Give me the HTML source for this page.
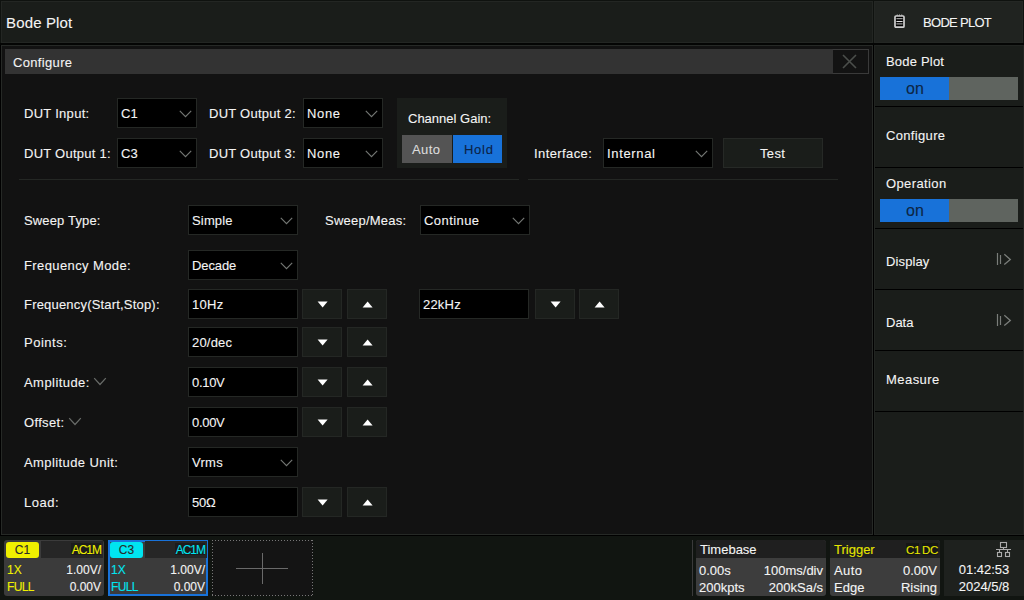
<!DOCTYPE html>
<html><head><meta charset="utf-8">
<style>
*{margin:0;padding:0;box-sizing:border-box}
html,body{width:1024px;height:600px;overflow:hidden;background:#000;font-family:"Liberation Sans",sans-serif;color:#f4f4f4;font-size:13px}
.a{position:absolute}
.t{position:absolute;white-space:nowrap;line-height:15px;height:15px;-webkit-text-stroke:0.1px currentColor}
.dd{position:absolute;background:#000;border:1px solid #252825;height:30px}
.btn{position:absolute;background:#1a1d1a;border:1px solid #242724;width:40px;height:30px}
.chev{position:absolute;right:4px;top:11px;width:13px;height:8px}
.tri-d{position:absolute;left:15px;top:12px;width:0;height:0;border-left:5px solid transparent;border-right:5px solid transparent;border-top:6px solid #fff}
.tri-u{position:absolute;left:15px;top:12px;width:0;height:0;border-left:5px solid transparent;border-right:5px solid transparent;border-bottom:6px solid #fff}
.sep{position:absolute;height:1px;background:#242724}
.sb{position:absolute;left:875px;width:149px;background:#1c1f1c}
.sdiv{position:absolute;left:875px;width:148px;height:2px;background:#000}
</style></head><body>
<div class="a" style="left:0px;top:0px;width:1024px;height:45px;background:#0f120f;"></div>
<div class="a" style="left:1px;top:1px;width:872px;height:42px;background:#1a1d1a;border:1px solid #232623"></div>
<div class="a" style="left:0px;top:43px;width:1024px;height:2px;background:#040504;"></div>
<div class="t" style="left:6px;top:15px;font-size:15px;letter-spacing:0.15px">Bode Plot</div>
<div class="a" style="left:874px;top:1px;width:149px;height:42px;background:#202320;border:1px solid #242724"></div>
<div class="a" style="left:1px;top:45px;width:872px;height:490px;background:#121212;border:1px solid #262926"></div>
<div class="a" style="left:5px;top:49px;width:827px;height:25px;background:#333333;"></div>
<div class="t" style="left:13px;top:55px;letter-spacing:0.34px;">Configure</div>
<div class="a" style="left:832px;top:49px;width:37px;height:25px;background:#131313;border:1px solid #3a3a3a;border-left-color:#333"></div>
<svg class="a" style="left:842px;top:54px" width="15" height="15" viewBox="0 0 15 15"><path d="M1 1L14 14M14 1L1 14" stroke="#4b4e4b" stroke-width="1.6"/></svg>
<div class="t" style="left:24px;top:106px;letter-spacing:0.28px;">DUT Input:</div>
<div class="dd" style="left:117px;top:98px;width:80px"><div class="t" style="left:3px;top:7px;">C1</div><svg class="chev" viewBox="0 0 13 8"><path d="M0.8 0.8L6.5 6.6L12.2 0.8" fill="none" stroke="#747774" stroke-width="1.15"/></svg></div>
<div class="t" style="left:209px;top:106px;letter-spacing:0.25px;">DUT Output 2:</div>
<div class="dd" style="left:303px;top:98px;width:80px"><div class="t" style="left:3px;top:7px;letter-spacing:0.67px;">None</div><svg class="chev" viewBox="0 0 13 8"><path d="M0.8 0.8L6.5 6.6L12.2 0.8" fill="none" stroke="#747774" stroke-width="1.15"/></svg></div>
<div class="t" style="left:24px;top:146px;letter-spacing:0.25px;">DUT Output 1:</div>
<div class="dd" style="left:117px;top:138px;width:80px"><div class="t" style="left:3px;top:7px;">C3</div><svg class="chev" viewBox="0 0 13 8"><path d="M0.8 0.8L6.5 6.6L12.2 0.8" fill="none" stroke="#747774" stroke-width="1.15"/></svg></div>
<div class="t" style="left:209px;top:146px;letter-spacing:0.25px;">DUT Output 3:</div>
<div class="dd" style="left:303px;top:138px;width:80px"><div class="t" style="left:3px;top:7px;letter-spacing:0.67px;">None</div><svg class="chev" viewBox="0 0 13 8"><path d="M0.8 0.8L6.5 6.6L12.2 0.8" fill="none" stroke="#747774" stroke-width="1.15"/></svg></div>
<div class="a" style="left:397px;top:98px;width:110px;height:70px;background:#1a1d1a;"></div>
<div class="t" style="left:408px;top:111px;">Channel Gain:</div>
<div class="a" style="left:402px;top:135px;width:50px;height:28px;background:#545454;"></div>
<div class="t" style="left:412px;top:142px;color:#dcdcdc;letter-spacing:0.40px;">Auto</div>
<div class="a" style="left:453px;top:135px;width:49px;height:28px;background:#1872d9;"></div>
<div class="t" style="left:464px;top:142px;color:#0c2245;letter-spacing:0.73px;">Hold</div>
<div class="t" style="left:534px;top:146px;letter-spacing:0.40px;">Interface:</div>
<div class="dd" style="left:603px;top:138px;width:110px"><div class="t" style="left:3px;top:7px;letter-spacing:0.66px;">Internal</div><svg class="chev" viewBox="0 0 13 8"><path d="M0.8 0.8L6.5 6.6L12.2 0.8" fill="none" stroke="#747774" stroke-width="1.15"/></svg></div>
<div class="a" style="left:723px;top:138px;width:100px;height:30px;background:#1a1d1a;border:1px solid #262926"></div>
<div class="t" style="left:760px;top:146px;letter-spacing:0.33px;">Test</div>
<div class="sep" style="left:19px;top:179px;width:500px"></div><div class="sep" style="left:528px;top:179px;width:310px"></div>
<div class="t" style="left:24px;top:213px;letter-spacing:0.15px;">Sweep Type:</div>
<div class="dd" style="left:188px;top:205px;width:110px"><div class="t" style="left:3px;top:7px;letter-spacing:0.16px;">Simple</div><svg class="chev" viewBox="0 0 13 8"><path d="M0.8 0.8L6.5 6.6L12.2 0.8" fill="none" stroke="#747774" stroke-width="1.15"/></svg></div>
<div class="t" style="left:325px;top:213px;letter-spacing:0.24px;">Sweep/Meas:</div>
<div class="dd" style="left:420px;top:205px;width:110px"><div class="t" style="left:3px;top:7px;letter-spacing:0.43px;">Continue</div><svg class="chev" viewBox="0 0 13 8"><path d="M0.8 0.8L6.5 6.6L12.2 0.8" fill="none" stroke="#747774" stroke-width="1.15"/></svg></div>
<div class="t" style="left:24px;top:258px;letter-spacing:0.39px;">Frequency Mode:</div>
<div class="dd" style="left:188px;top:250px;width:110px"><div class="t" style="left:3px;top:7px;letter-spacing:-0.10px;">Decade</div><svg class="chev" viewBox="0 0 13 8"><path d="M0.8 0.8L6.5 6.6L12.2 0.8" fill="none" stroke="#747774" stroke-width="1.15"/></svg></div>
<div class="t" style="left:24px;top:297px;letter-spacing:0.19px;">Frequency(Start,Stop):</div>
<div class="dd" style="left:188px;top:289px;width:110px"><div class="t" style="left:3px;top:7px;letter-spacing:0.33px;">10Hz</div></div>
<div class="btn" style="left:302px;top:289px"><svg class="a" style="left:-1px;top:-1px" width="40" height="30"><path d="M15.6 12.6H25.6L20.6 18.4Z" fill="#fff"/></svg></div><div class="btn" style="left:347px;top:289px"><svg class="a" style="left:-1px;top:-1px" width="40" height="30"><path d="M15.6 18.4H25.6L20.6 12.6Z" fill="#fff"/></svg></div>
<div class="dd" style="left:419px;top:289px;width:110px"><div class="t" style="left:3px;top:7px;letter-spacing:0.20px;">22kHz</div></div>
<div class="btn" style="left:535px;top:289px"><svg class="a" style="left:-1px;top:-1px" width="40" height="30"><path d="M15.6 12.6H25.6L20.6 18.4Z" fill="#fff"/></svg></div><div class="btn" style="left:579px;top:289px"><svg class="a" style="left:-1px;top:-1px" width="40" height="30"><path d="M15.6 18.4H25.6L20.6 12.6Z" fill="#fff"/></svg></div>
<div class="t" style="left:24px;top:335px;letter-spacing:0.50px;">Points:</div>
<div class="dd" style="left:188px;top:327px;width:110px"><div class="t" style="left:3px;top:7px;letter-spacing:0.20px;">20/dec</div></div>
<div class="btn" style="left:302px;top:327px"><svg class="a" style="left:-1px;top:-1px" width="40" height="30"><path d="M15.6 12.6H25.6L20.6 18.4Z" fill="#fff"/></svg></div><div class="btn" style="left:347px;top:327px"><svg class="a" style="left:-1px;top:-1px" width="40" height="30"><path d="M15.6 18.4H25.6L20.6 12.6Z" fill="#fff"/></svg></div>
<div class="t" style="left:24px;top:375px;letter-spacing:0.44px;">Amplitude:</div>
<svg class="a" style="left:93px;top:377px" width="14" height="10" viewBox="0 0 14 10"><path d="M1.2 1.2L7 7.5L12.8 1.2" fill="none" stroke="#686b68" stroke-width="1.25"/></svg>
<div class="dd" style="left:188px;top:367px;width:110px"><div class="t" style="left:3px;top:7px;letter-spacing:-0.30px;">0.10V</div></div>
<div class="btn" style="left:302px;top:367px"><svg class="a" style="left:-1px;top:-1px" width="40" height="30"><path d="M15.6 12.6H25.6L20.6 18.4Z" fill="#fff"/></svg></div><div class="btn" style="left:347px;top:367px"><svg class="a" style="left:-1px;top:-1px" width="40" height="30"><path d="M15.6 18.4H25.6L20.6 12.6Z" fill="#fff"/></svg></div>
<div class="t" style="left:24px;top:415px;letter-spacing:0.33px;">Offset:</div>
<svg class="a" style="left:68px;top:417px" width="14" height="10" viewBox="0 0 14 10"><path d="M1.2 1.2L7 7.5L12.8 1.2" fill="none" stroke="#686b68" stroke-width="1.25"/></svg>
<div class="dd" style="left:188px;top:407px;width:110px"><div class="t" style="left:3px;top:7px;letter-spacing:-0.30px;">0.00V</div></div>
<div class="btn" style="left:302px;top:407px"><svg class="a" style="left:-1px;top:-1px" width="40" height="30"><path d="M15.6 12.6H25.6L20.6 18.4Z" fill="#fff"/></svg></div><div class="btn" style="left:347px;top:407px"><svg class="a" style="left:-1px;top:-1px" width="40" height="30"><path d="M15.6 18.4H25.6L20.6 12.6Z" fill="#fff"/></svg></div>
<div class="t" style="left:24px;top:455px;letter-spacing:0.41px;">Amplitude Unit:</div>
<div class="dd" style="left:188px;top:447px;width:110px"><div class="t" style="left:3px;top:7px;letter-spacing:0.27px;">Vrms</div><svg class="chev" viewBox="0 0 13 8"><path d="M0.8 0.8L6.5 6.6L12.2 0.8" fill="none" stroke="#747774" stroke-width="1.15"/></svg></div>
<div class="t" style="left:24px;top:495px;letter-spacing:0.50px;">Load:</div>
<div class="dd" style="left:188px;top:487px;width:110px"><div class="t" style="left:3px;top:7px;letter-spacing:-0.20px;">50&Omega;</div></div>
<div class="btn" style="left:302px;top:487px"><svg class="a" style="left:-1px;top:-1px" width="40" height="30"><path d="M15.6 12.6H25.6L20.6 18.4Z" fill="#fff"/></svg></div><div class="btn" style="left:347px;top:487px"><svg class="a" style="left:-1px;top:-1px" width="40" height="30"><path d="M15.6 18.4H25.6L20.6 12.6Z" fill="#fff"/></svg></div>
<svg class="a" style="left:893px;top:13px" width="14" height="17" viewBox="0 0 14 17"><path d="M3 3H10A1 1 0 0 1 11 4V13.2A1 1 0 0 1 10 14.2H3A1 1 0 0 1 2 13.2V4A1 1 0 0 1 3 3Z" fill="#000" stroke="#cfcfcf" stroke-width="1.7"/><path d="M3.4 5.6H9.6M3.4 10.9H9.6" stroke="#9a9a9a" stroke-width="1.1"/><path d="M3.4 8.5H9.6" stroke="#e0e0e0" stroke-width="1.1"/><path d="M3.2 2.4L4.2 1.2L5.2 2.4ZM5.5 2.4L6.5 1.2L7.5 2.4ZM7.8 2.4L8.8 1.2L9.8 2.4Z" fill="#cfcfcf"/></svg>
<div class="t" style="left:923px;top:15px;letter-spacing:-0.7px">BODE PLOT</div>
<div class="a" style="left:874px;top:45px;width:150px;height:490px;background:#1a1d1a;border:1px solid #212421"></div>
<div class="a" style="left:875px;top:106px;width:148px;height:1px;background:#000;"></div>
<div class="a" style="left:875px;top:167px;width:148px;height:1px;background:#000;"></div>
<div class="a" style="left:875px;top:228px;width:148px;height:1px;background:#000;"></div>
<div class="a" style="left:875px;top:289px;width:148px;height:1px;background:#000;"></div>
<div class="a" style="left:875px;top:350px;width:148px;height:1px;background:#000;"></div>
<div class="a" style="left:875px;top:411px;width:148px;height:1px;background:#000;"></div>
<div class="t" style="left:886px;top:54px;letter-spacing:0.20px;">Bode Plot</div>
<div class="a" style="left:880px;top:77px;width:69px;height:23px;background:#1872d9;"></div>
<div class="a" style="left:949px;top:77px;width:69px;height:23px;background:#5f645f;"></div>
<div class="t" style="left:906px;top:80px;font-size:16px;line-height:18px;height:18px;color:#0d2645">on</div>
<div class="t" style="left:886px;top:128px;letter-spacing:0.34px;">Configure</div>
<div class="t" style="left:886px;top:176px;letter-spacing:0.38px;">Operation</div>
<div class="a" style="left:880px;top:199px;width:69px;height:23px;background:#1872d9;"></div>
<div class="a" style="left:949px;top:199px;width:69px;height:23px;background:#5f645f;"></div>
<div class="t" style="left:906px;top:202px;font-size:16px;line-height:18px;height:18px;color:#0d2645">on</div>
<div class="t" style="left:886px;top:254px;letter-spacing:0.12px;">Display</div>
<svg class="a" style="left:996px;top:252px" width="16" height="14" viewBox="0 0 16 14"><path d="M1.5 1V13M4.5 3V12" stroke="#7a7d7a" stroke-width="1.2"/><path d="M8.3 2.3L14.3 7.4L8.3 12.6" fill="none" stroke="#7a7d7a" stroke-width="1.3"/></svg>
<div class="t" style="left:886px;top:315px;">Data</div>
<svg class="a" style="left:996px;top:313px" width="16" height="14" viewBox="0 0 16 14"><path d="M1.5 1V13M4.5 3V12" stroke="#7a7d7a" stroke-width="1.2"/><path d="M8.3 2.3L14.3 7.4L8.3 12.6" fill="none" stroke="#7a7d7a" stroke-width="1.3"/></svg>
<div class="t" style="left:886px;top:372px;letter-spacing:0.45px;">Measure</div>
<div class="a" style="left:0px;top:536px;width:1024px;height:64px;background:#111511;"></div>
<div class="a" style="left:4px;top:540px;width:100px;height:56px;background:#3b3b3b;border-radius:3px"></div>
<div class="a" style="left:41px;top:541px;width:62px;height:17px;background:#262626;"></div>
<div class="a" style="left:71px;top:543px;width:30px;height:12px;background:#1c1c1c;"></div>
<div class="a" style="left:6px;top:542px;width:33px;height:16px;background:#f0f000;border-radius:3px"></div>
<div class="t" style="left:6px;top:543px;width:33px;text-align:center;color:#2a2a2a;font-size:12px">C1</div>
<div class="t" style="right:923px;top:543px;text-align:right;color:#f0f000;font-size:12px;letter-spacing:-1px;">AC1M</div>
<div class="t" style="left:7px;top:563px;color:#f0f000;font-size:12px;">1X</div>
<div class="t" style="right:923px;top:563px;text-align:right;font-size:12px;">1.00V/</div>
<div class="t" style="left:7px;top:580px;color:#f0f000;font-size:12px;letter-spacing:-0.6px">FULL</div>
<div class="t" style="right:923px;top:580px;text-align:right;font-size:12px;">0.00V</div>
<div class="a" style="left:108px;top:540px;width:100px;height:56px;background:#3b3b3b;border:2px solid #1872d9"></div>
<div class="a" style="left:145px;top:541px;width:62px;height:17px;background:#262626;"></div>
<div class="a" style="left:175px;top:543px;width:30px;height:12px;background:#1c1c1c;"></div>
<div class="a" style="left:110px;top:542px;width:33px;height:16px;background:#00e5f0;border-radius:3px"></div>
<div class="t" style="left:110px;top:543px;width:33px;text-align:center;color:#2a2a2a;font-size:12px">C3</div>
<div class="t" style="right:819px;top:543px;text-align:right;color:#00e5f0;font-size:12px;letter-spacing:-1px;">AC1M</div>
<div class="t" style="left:111px;top:563px;color:#00e5f0;font-size:12px;">1X</div>
<div class="t" style="right:819px;top:563px;text-align:right;font-size:12px;">1.00V/</div>
<div class="t" style="left:111px;top:580px;color:#00e5f0;font-size:12px;letter-spacing:-0.6px">FULL</div>
<div class="t" style="right:819px;top:580px;text-align:right;font-size:12px;">0.00V</div>
<div class="a" style="left:212px;top:540px;width:101px;height:56px;background:#141414;"></div>
<svg class="a" style="left:212px;top:540px" width="101" height="56"><g stroke="#777" stroke-width="1" stroke-dasharray="1 2" fill="none"><path d="M0 0.5H101M0 55.5H101M0.5 0V56M100.5 0V56"/></g></svg>
<div class="a" style="left:236px;top:568px;width:52px;height:1px;background:#6a6a6a;"></div>
<div class="a" style="left:262px;top:553px;width:1px;height:31px;background:#6a6a6a;"></div>
<div class="a" style="left:692px;top:540px;width:1px;height:56px;background:#3a3a3a;"></div>
<div class="a" style="left:696px;top:540px;width:130px;height:56px;background:#3d3d3d;border-radius:3px"></div>
<div class="a" style="left:696px;top:540px;width:130px;height:18px;background:#1f1f1f;border-radius:3px 3px 0 0"></div>
<div class="t" style="left:700px;top:542px;">Timebase</div>
<div class="t" style="left:699px;top:563px;">0.00s</div>
<div class="t" style="right:201px;top:563px;text-align:right;">100ms/div</div>
<div class="t" style="left:699px;top:580px;">200kpts</div>
<div class="t" style="right:201px;top:580px;text-align:right;">200kSa/s</div>
<div class="a" style="left:830px;top:540px;width:110px;height:56px;background:#3d3d3d;border-radius:3px"></div>
<div class="a" style="left:830px;top:540px;width:110px;height:18px;background:#1f1f1f;border-radius:3px 3px 0 0"></div>
<div class="t" style="left:834px;top:542px;color:#e6e600;">Trigger</div>
<div class="a" style="left:906px;top:543px;width:13px;height:12px;background:#161616;"></div>
<div class="a" style="left:922px;top:543px;width:16px;height:12px;background:#161616;"></div>
<div class="t" style="left:906px;top:543px;font-size:11.5px;color:#e6e600;letter-spacing:-0.3px">C1</div>
<div class="t" style="left:922px;top:543px;font-size:11.5px;color:#e6e600;letter-spacing:-0.3px">DC</div>
<div class="t" style="left:834px;top:563px;letter-spacing:0.40px;">Auto</div>
<div class="t" style="right:87px;top:563px;text-align:right;">0.00V</div>
<div class="t" style="left:834px;top:580px;">Edge</div>
<div class="t" style="right:87px;top:580px;text-align:right;">Rising</div>
<div class="a" style="left:944px;top:540px;width:80px;height:56px;background:#1e211e;"></div>
<svg class="a" style="left:992px;top:538px" width="24" height="24" viewBox="0 0 24 24"><g fill="none" stroke="#ababab" stroke-width="1.1"><rect x="8.5" y="4.5" width="6" height="5"/><rect x="5.5" y="14.5" width="4" height="4"/><rect x="13.5" y="14.5" width="4" height="4"/><path d="M11.5 10V11.5M4 11.5H19M7.5 11.5V14M15.5 11.5V14"/></g></svg>
<div class="t" style="left:944px;top:562px;width:80px;text-align:center">01:42:53</div>
<div class="t" style="left:944px;top:579px;width:80px;text-align:center">2024/5/8</div>
</body></html>
